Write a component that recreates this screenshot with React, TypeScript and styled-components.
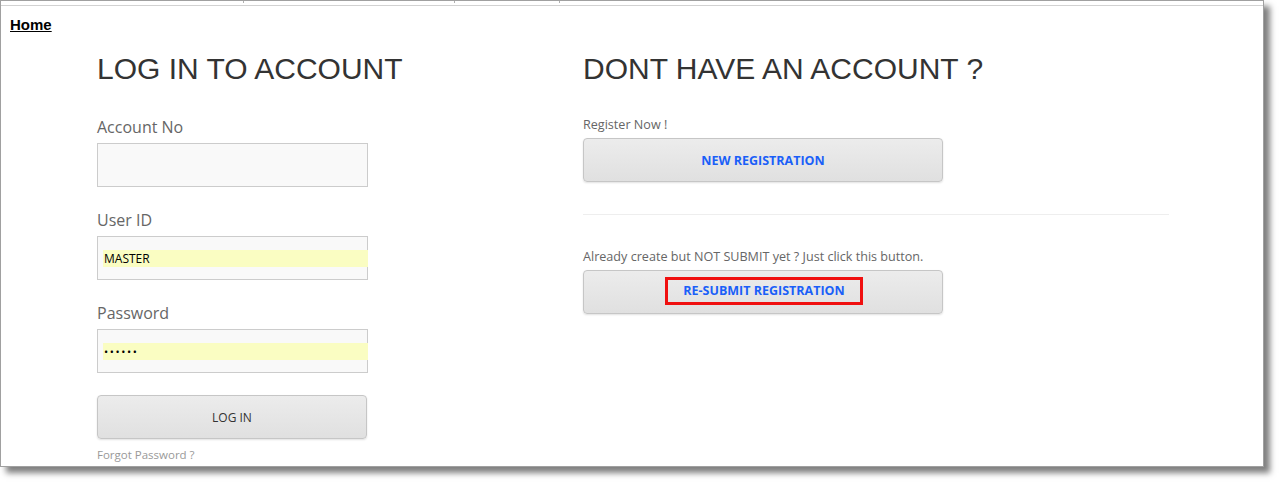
import React from 'react';
import styled, { createGlobalStyle } from 'styled-components';

const GlobalStyle = createGlobalStyle`
  html, body {
    margin: 0;
    padding: 0;
    background: #ffffff;
  }
  * {
    box-sizing: border-box;
  }
`;

const Page = styled.div`
  padding-bottom: 16px;
`;

// Outer window frame with drop shadow
const Frame = styled.div`
  width: 1264px;
  height: 467px;
  border: 1px solid #a0a0a0;
  background: #ffffff;
  box-shadow: 6px 6px 6px rgba(0, 0, 0, 0.5);
  overflow: hidden;
`;

const TopStrip = styled.div`
  display: flex;
  height: 5px;
  border-bottom: 1px solid #d2d2d2;
`;

const Tick = styled.span<{ $gap: number }>`
  width: 1px;
  height: 2px;
  margin-left: ${(p) => p.$gap}px;
  background: #b0b0b0;
`;

const HomeLink = styled.a`
  display: inline-block;
  margin: 10px 0 0 9px;
  font-family: 'Liberation Sans', Arial, sans-serif;
  font-size: 15px;
  font-weight: bold;
  line-height: 17px;
  color: #000000;
  text-decoration: underline;
`;

const Columns = styled.div`
  display: grid;
  grid-template-columns: 486px 586px;
  padding-left: 96px;
  margin-top: 17px;
`;

const Column = styled.div`
  display: flex;
  flex-direction: column;
  align-items: flex-start;
`;

const Heading = styled.h1`
  margin: 0 0 29px;
  font-family: 'Liberation Sans', Arial, sans-serif;
  font-size: 30px;
  font-weight: normal;
  line-height: 36px;
  color: #333333;
`;

const Label = styled.label`
  margin-bottom: 5px;
  font-family: 'Open Sans', sans-serif;
  font-size: 16px;
  line-height: 22px;
  color: #666666;
`;

const Field = styled.div`
  width: 271px;
  height: 44px;
  margin-bottom: 22px;
  padding: 13px 0 0 5px;
  border: 1px solid #cccccc;
  background: #f9f9f9;

  &:last-of-type {
    margin-bottom: 0;
  }
`;

const Autofill = styled.div<{ $secret?: boolean }>`
  height: 17px;
  margin-right: -1px;
  padding-left: 1px;
  background: #fafdc2;
  font-family: 'Open Sans', sans-serif;
  font-size: ${(p) => (p.$secret ? '11px' : '12px')};
  line-height: 17px;
  letter-spacing: ${(p) => (p.$secret ? '1.6px' : '0')};
  color: #000000;
`;

const Button = styled.button<{ $width: number; $accent?: boolean }>`
  display: flex;
  align-items: center;
  justify-content: center;
  width: ${(p) => p.$width}px;
  height: 44px;
  padding: 0;
  border: 1px solid #c6c6c6;
  border-radius: 4px;
  background: linear-gradient(#ececec, #e0e0e0);
  box-shadow: 0 1px 2px rgba(0, 0, 0, 0.12);
  font-family: 'Open Sans', sans-serif;
  font-size: ${(p) => (p.$accent ? '12.5px' : '12px')};
  font-weight: ${(p) => (p.$accent ? 700 : 400)};
  color: ${(p) => (p.$accent ? '#1a5ff8' : '#333333')};
  cursor: pointer;
`;

const LoginButton = styled(Button)`
  margin-top: 22px;
`;

const ForgotLink = styled.a`
  margin-top: 8px;
  font-family: 'Open Sans', sans-serif;
  font-size: 11.5px;
  line-height: 16px;
  color: #999999;
  text-decoration: none;
`;

const Hint = styled.p`
  margin: 0 0 5px;
  font-family: 'Open Sans', sans-serif;
  font-size: 12.6px;
  line-height: 17px;
  color: #666666;
`;

const Divider = styled.hr`
  width: 586px;
  margin: 32px 0 33px;
  border: 0;
  border-top: 1px solid #eeeeee;
`;

// Red annotation box around the resubmit label
const Highlight = styled.span`
  padding: 2px 15px 3px;
  margin: -3px 0 0 2px;
  border: 3px solid #f01010;
  line-height: 17px;
`;

const App: React.FC = () => {
  return (
    <Page>
      <GlobalStyle />
      <Frame>
        <TopStrip>
          <Tick $gap={242} />
          <Tick $gap={210} />
          <Tick $gap={104} />
        </TopStrip>
        <HomeLink href="#">Home</HomeLink>
        <Columns>
          <Column>
            <Heading>LOG IN TO ACCOUNT</Heading>
            <Label>Account No</Label>
            <Field />
            <Label>User ID</Label>
            <Field>
              <Autofill>MASTER</Autofill>
            </Field>
            <Label>Password</Label>
            <Field>
              <Autofill $secret>••••••</Autofill>
            </Field>
            <LoginButton $width={270}>LOG IN</LoginButton>
            <ForgotLink href="#">Forgot Password ?</ForgotLink>
          </Column>
          <Column>
            <Heading>DONT HAVE AN ACCOUNT ?</Heading>
            <Hint>Register Now !</Hint>
            <Button $width={360} $accent>NEW REGISTRATION</Button>
            <Divider />
            <Hint>Already create but NOT SUBMIT yet ? Just click this button.</Hint>
            <Button $width={360} $accent>
              <Highlight>RE-SUBMIT REGISTRATION</Highlight>
            </Button>
          </Column>
        </Columns>
      </Frame>
    </Page>
  );
};

export default App;
